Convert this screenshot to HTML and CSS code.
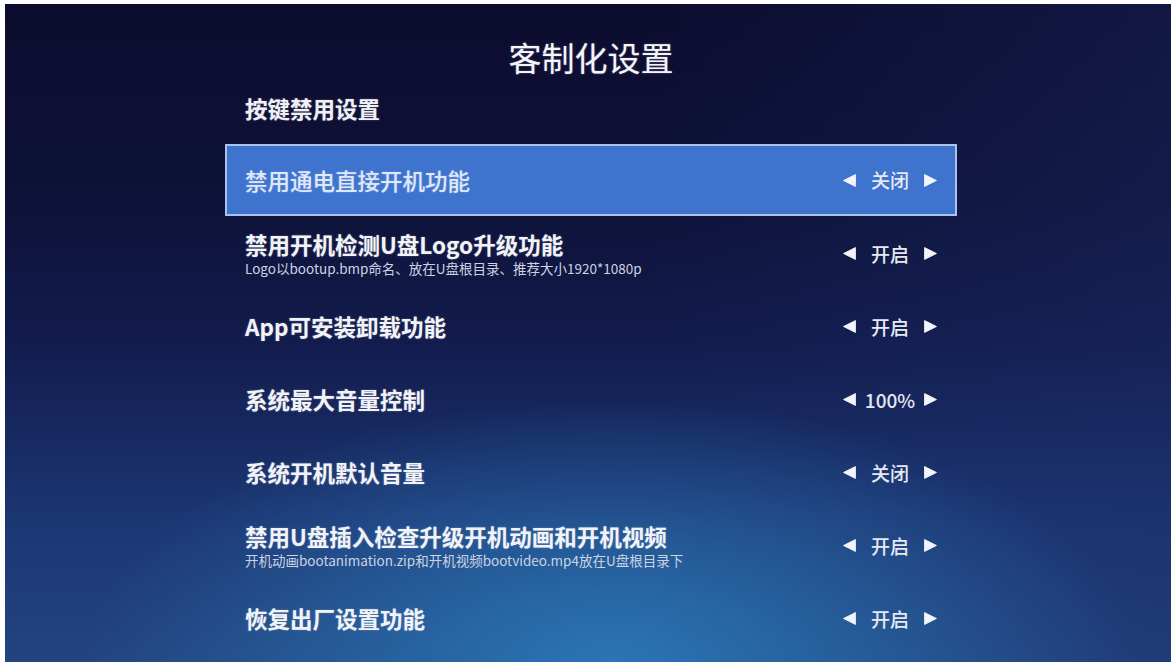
FILE: index.html
```html
<!DOCTYPE html>
<html lang="zh-CN">
<head>
<meta charset="utf-8">
<title>客制化设置</title>
<link rel="stylesheet" href="styles.css">
</head>
<body>
<div class="screen">
  <div class="column">
    <h1 class="title">客制化设置</h1>
    <h2 class="section">按键禁用设置</h2>
    <ul class="list">
      <li class="row selected">
        <div class="label"><div class="name">禁用通电直接开机功能</div></div>
        <div class="value"><svg class="arrow" viewBox="0 0 12 12"><polygon points="11.5,0.5 11.5,11.5 0.5,6" stroke-linejoin="round"/></svg><span class="val">关闭</span><svg class="arrow" viewBox="0 0 12 12"><polygon points="0.5,0.5 0.5,11.5 11.5,6" stroke-linejoin="round"/></svg></div>
      </li>
      <li class="row">
        <div class="label"><div class="name">禁用开机检测U盘Logo升级功能</div><div class="sub">Logo以bootup.bmp命名、放在U盘根目录、推荐大小1920*1080p</div></div>
        <div class="value"><svg class="arrow" viewBox="0 0 12 12"><polygon points="11.5,0.5 11.5,11.5 0.5,6" stroke-linejoin="round"/></svg><span class="val">开启</span><svg class="arrow" viewBox="0 0 12 12"><polygon points="0.5,0.5 0.5,11.5 11.5,6" stroke-linejoin="round"/></svg></div>
      </li>
      <li class="row">
        <div class="label"><div class="name">App可安装卸载功能</div></div>
        <div class="value"><svg class="arrow" viewBox="0 0 12 12"><polygon points="11.5,0.5 11.5,11.5 0.5,6" stroke-linejoin="round"/></svg><span class="val">开启</span><svg class="arrow" viewBox="0 0 12 12"><polygon points="0.5,0.5 0.5,11.5 11.5,6" stroke-linejoin="round"/></svg></div>
      </li>
      <li class="row">
        <div class="label"><div class="name">系统最大音量控制</div></div>
        <div class="value"><svg class="arrow" viewBox="0 0 12 12"><polygon points="11.5,0.5 11.5,11.5 0.5,6" stroke-linejoin="round"/></svg><span class="val">100%</span><svg class="arrow" viewBox="0 0 12 12"><polygon points="0.5,0.5 0.5,11.5 11.5,6" stroke-linejoin="round"/></svg></div>
      </li>
      <li class="row">
        <div class="label"><div class="name">系统开机默认音量</div></div>
        <div class="value"><svg class="arrow" viewBox="0 0 12 12"><polygon points="11.5,0.5 11.5,11.5 0.5,6" stroke-linejoin="round"/></svg><span class="val">关闭</span><svg class="arrow" viewBox="0 0 12 12"><polygon points="0.5,0.5 0.5,11.5 11.5,6" stroke-linejoin="round"/></svg></div>
      </li>
      <li class="row">
        <div class="label"><div class="name">禁用U盘插入检查升级开机动画和开机视频</div><div class="sub">开机动画bootanimation.zip和开机视频bootvideo.mp4放在U盘根目录下</div></div>
        <div class="value"><svg class="arrow" viewBox="0 0 12 12"><polygon points="11.5,0.5 11.5,11.5 0.5,6" stroke-linejoin="round"/></svg><span class="val">开启</span><svg class="arrow" viewBox="0 0 12 12"><polygon points="0.5,0.5 0.5,11.5 11.5,6" stroke-linejoin="round"/></svg></div>
      </li>
      <li class="row">
        <div class="label"><div class="name">恢复出厂设置功能</div></div>
        <div class="value"><svg class="arrow" viewBox="0 0 12 12"><polygon points="11.5,0.5 11.5,11.5 0.5,6" stroke-linejoin="round"/></svg><span class="val">开启</span><svg class="arrow" viewBox="0 0 12 12"><polygon points="0.5,0.5 0.5,11.5 11.5,6" stroke-linejoin="round"/></svg></div>
      </li>
    </ul>
  </div>
</div>
</body>
</html>
```
FILE: styles.css
```css
html, body {
  margin: 0;
  padding: 0;
  background: #ffffff;
}
body {
  width: 1176px;
  height: 662px;
  overflow: hidden;
  font-family: "Noto Sans CJK SC", "Noto Sans", sans-serif;
  color: #f2f3f8;
}
.screen {
  margin: 4px 5px 0 5px;
  height: 658px;
  overflow: hidden;
  box-sizing: border-box;
  padding-left: 220px;
  background:
    radial-gradient(ellipse 45% 40% at 52% 100%, rgba(44, 126, 190, 0.85), rgba(44, 126, 190, 0) 100%),
    linear-gradient(to right, rgba(20, 30, 80, 0) 55%, rgba(28, 45, 105, 0.35) 100%),
    linear-gradient(to bottom, #0c0c2e 0%, #0e1238 30%, #121c4e 52%, #1c3672 78%, #23447f 100%);
}
.column {
  width: 732px;
  display: flex;
  flex-direction: column;
}
.title {
  margin: 33px 0 0 0;
  font-size: 33px;
  line-height: 40px;
  font-weight: 400;
  text-align: center;
  color: #f4f5fa;
  text-shadow: 0 0 2px rgba(255, 255, 255, 0.35);
}
.section {
  margin: 16px 0 0 0;
  padding-left: 20px;
  font-size: 22.5px;
  line-height: 30px;
  font-weight: 700;
  color: #f0f1f6;
  text-shadow: 0 0 2px rgba(255, 255, 255, 0.3);
}
.list {
  list-style: none;
  margin: 21px 0 0 0;
  padding: 0;
}
.row {
  height: 73px;
  box-sizing: border-box;
  display: flex;
  align-items: center;
  justify-content: space-between;
  padding: 0 20px;
}
.row.selected {
  height: 72px;
  margin-bottom: 1px;
  background: #3e73ce;
  border: 2px solid #a9c3ee;
  padding: 0 18px;
}
.label {
  display: flex;
  flex-direction: column;
}
.name {
  font-size: 22.5px;
  line-height: 27px;
  font-weight: 700;
  color: #f2f3f8;
  text-shadow: 0 0 2px rgba(255, 255, 255, 0.3);
}
.selected .name {
  font-weight: 500;
  color: #dfe8fa;
}
.sub {
  margin-top: 1px;
  font-size: 13.5px;
  line-height: 18px;
  font-weight: 400;
  color: #cdd3e2;
}
.value {
  display: flex;
  align-items: center;
}
.val {
  width: 68px;
  text-align: center;
  font-size: 19px;
  line-height: 24px;
  font-weight: 500;
  color: #e6e9f2;
}
.arrow {
  width: 13px;
  height: 13px;
  fill: #f2f4fa;
  stroke: #f2f4fa;
  stroke-width: 0.8;
}
```
